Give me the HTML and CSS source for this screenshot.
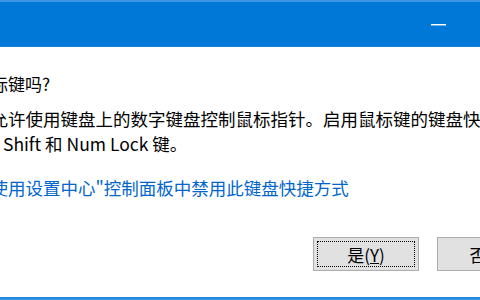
FILE: index.html
```html
<!DOCTYPE html>
<html lang="zh-CN">
<head>
<meta charset="utf-8">
<link rel="stylesheet" href="styles.css">
</head>
<body>
<div class="window">
  <div class="titlebar">
    <span class="min"></span>
  </div>
  <div class="content">
    <div class="text">
      <p class="heading">鼠标键吗?</p>
      <p class="body">键允许使用键盘上的数字键盘控制鼠标指针。启用鼠标键的键盘快捷方式</p>
      <p class="body line2">Shift 和 Num Lock 键。</p>
      <p class="link">松使用设置中心"控制面板中禁用此键盘快捷方式</p>
    </div>
    <div class="buttons">
      <div class="btn"><span class="ring">是(<u>Y</u>)</span></div>
      <div class="btn"><span class="ring plain">否(<u>N</u>)</span></div>
    </div>
  </div>
  <div class="edge"></div>
</div>
</body>
</html>
```
FILE: styles.css
```css
html, body {
  margin: 0;
  padding: 0;
  background: #ffffff;
}
body {
  width: 480px;
  height: 300px;
  overflow: hidden;
  font-family: "Noto Sans CJK SC", "Noto Sans", sans-serif;
  color: #000000;
}
.window {
  display: flex;
  flex-direction: column;
  height: 300px;
}
.titlebar {
  height: 44px;
  background: #0078d7;
  border-top: 2px solid #3e95e3;
  border-bottom: 1px solid #1a85dd;
  display: flex;
  justify-content: flex-end;
  align-items: center;
  flex: none;
}
.min {
  width: 15px;
  height: 1px;
  background: #ffffff;
  box-shadow: 0 1px 0 rgba(255,255,255,0.45);
  margin-right: 34px;
  margin-top: 1px;
}
.content {
  flex: 1;
  display: flex;
  flex-direction: column;
}
.text {
  margin-left: -27px;
  white-space: nowrap;
}
.text p {
  margin: 0;
  font-size: 17.5px;
  line-height: 25px;
}
.text .heading {
  margin-top: 24px;
  font-size: 17px;
  padding-left: 1px;
}
.text .heading + .body {
  margin-top: 10px;
}
.line2 {
  padding-left: 30px;
}
.text .link {
  color: #0066cc;
  margin-top: 19px;
}
.buttons {
  display: flex;
  gap: 18px;
  margin-top: 37px;
  padding-left: 313px;
}
.btn {
  flex: none;
  display: flex;
  box-sizing: border-box;
  width: 106px;
  height: 34px;
  background: #e1e1e1;
  border: 1px solid #adadad;
}
.ring {
  flex: 1;
  margin: 3px;
  border: 1px dotted #000000;
  display: flex;
  align-items: center;
  justify-content: center;
  font-size: 17px;
}
.ring.plain {
  border-color: transparent;
}
.edge {
  flex: none;
  height: 3px;
  background: linear-gradient(#1e7fd6, #3b9ae9);
  margin-top: auto;
}
```
